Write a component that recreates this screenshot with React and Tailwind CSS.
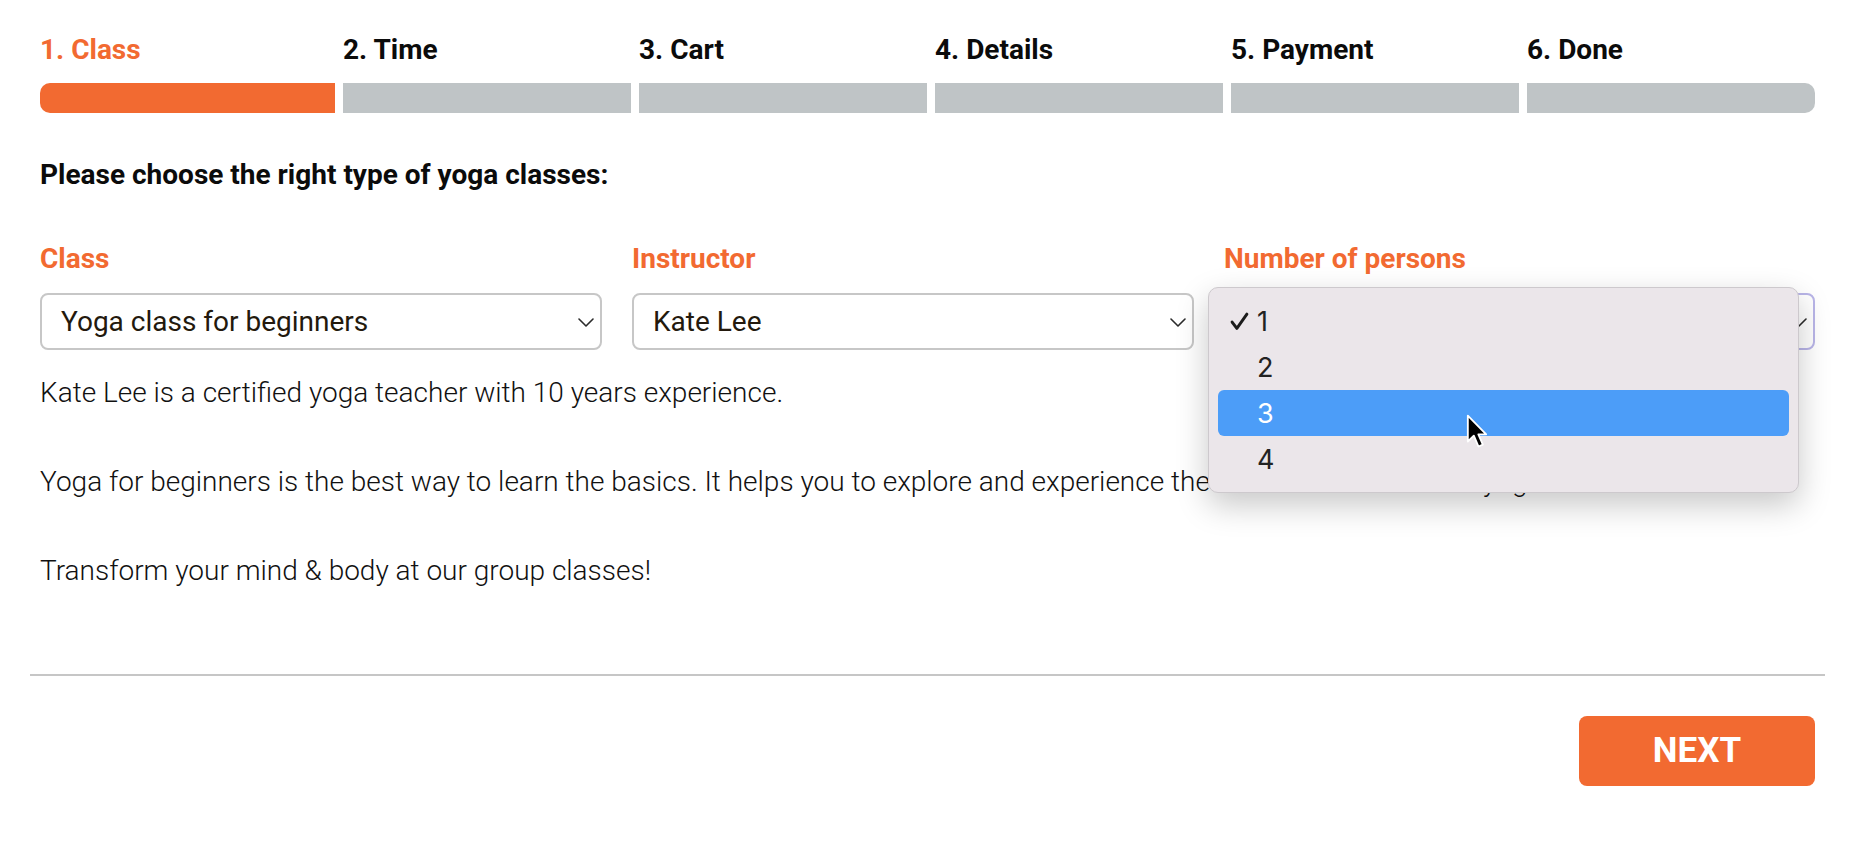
// Yoga booking wizard: step 1 (class selection) with open "persons" dropdown

const STEPS = ['1. Class', '2. Time', '3. Cart', '4. Details', '5. Payment', '6. Done'];

function Chevron({ className = '' }) {
    return (
        <svg viewBox="0 0 16 9" className={`w-[16px] h-[9px] ${className}`} fill="none" stroke="#2b2b2b" strokeWidth="1.6" strokeLinecap="round" strokeLinejoin="round">
            <polyline points="1,1 8,8 15,1" />
        </svg>
    );
}

function FakeSelect({ value, focused = false }) {
    return (
        <div className={`mt-[18px] h-[57px] rounded-[8px] border-2 bg-white flex items-center justify-between pl-[19px] pr-[6px] ${focused ? 'border-[#b9b5e8]' : 'border-[#c7c7c7]'}`}>
            <span className="text-[28px] text-[#23190d] leading-none">{value}</span>
            <Chevron className="mt-[2px]" />
        </div>
    );
}

function Field({ label, value, focused, children }) {
    return (
        <div className="relative">
            <p className="text-[28px] leading-[33px] font-bold text-[#f26a31]">{label}</p>
            <FakeSelect value={value} focused={focused} />
            {children}
        </div>
    );
}

function Cursor() {
    return (
        <svg viewBox="0 0 13 21" className="absolute left-[257px] top-[126px] w-[22px] h-[35px]">
            <path d="M1 1 L1 16.5 L4.6 13 L7.4 19.5 L10 18.4 L7.3 12.2 L12 12.2 Z" fill="#000" stroke="#fff" strokeWidth="1.1" strokeLinejoin="round" />
        </svg>
    );
}

function PersonsMenu() {
    const items = ['1', '2', '3', '4'];
    return (
        <div className="absolute left-[-16px] top-[45px] w-[591px] rounded-[10px] border border-[#cdc9cd] bg-[#ebe6ea] shadow-[0_12px_32px_rgba(0,0,0,0.22)] pt-[10px] pb-[10px] px-[9px] font-['Inter'] z-10">
            {items.map((n, i) => (
                <div key={n} className={`h-[46px] rounded-[6px] flex items-center ${i === 2 ? 'bg-[#4c9df8] text-white' : 'text-[#222]'}`}>
                    <span className="w-[39px] flex justify-end pr-[8px]">
                        {i === 0 && (
                            <svg viewBox="0 0 18 18" className="w-[19px] h-[19px]" fill="none" stroke="#1c1c1c" strokeWidth="2.8" strokeLinecap="round" strokeLinejoin="round">
                                <polyline points="2,9.5 6.5,15.5 16,2" />
                            </svg>
                        )}
                    </span>
                    <span className="text-[27px] leading-none">{n}</span>
                </div>
            ))}
            <Cursor />
        </div>
    );
}

export default function App() {
    return (
        <div className="w-[1859px] min-h-[850px] bg-white font-['Roboto'] text-black pl-[40px] pr-[44px] pt-[33px]">
            {/* progress steps */}
            <div className="grid grid-cols-[295px_repeat(5,1fr)] gap-x-[8px]">
                {STEPS.map((s, i) => (
                    <div key={s}>
                        <p className={`text-[28px] leading-[33px] font-bold ${i === 0 ? 'text-[#f26a31]' : 'text-[#0b0b0b]'}`}>{s}</p>
                        <div className={`mt-[17px] h-[30px] ${i === 0 ? 'bg-[#f26a31] rounded-l-[10px]' : 'bg-[#bfc4c6]'} ${i === 5 ? 'rounded-r-[10px]' : ''}`} />
                    </div>
                ))}
            </div>

            <h2 className="mt-[45px] text-[28px] leading-[33px] font-bold text-[#0b0b0b]">Please choose the right type of yoga classes:</h2>

            <div className="mt-[51px] grid grid-cols-[562px_562px_1fr] gap-x-[30px]">
                <Field label="Class" value="Yoga class for beginners" />
                <Field label="Instructor" value="Kate Lee" />
                <Field label="Number of persons" value="1" focused>
                    <PersonsMenu />
                </Field>
            </div>

            <div className="mt-[20px] text-[28px] leading-[45px] font-light text-[#111] space-y-[44px]">
                <p>Kate Lee is a certified yoga teacher with 10 years experience.</p>
                <p>Yoga for beginners is the best way to learn the basics. It helps you to explore and experience the wonderful benefits of yoga.</p>
                <p>Transform your mind &amp; body at our group classes!</p>
            </div>

            <div className="mt-[81px] -ml-[10px] -mr-[10px] h-[2px] bg-[#c6c6c6]" />

            <div className="mt-[40px] flex justify-end">
                <button className="w-[236px] h-[70px] rounded-[8px] bg-[#f26a31] text-white text-[35px] font-bold">NEXT</button>
            </div>
        </div>
    );
}
